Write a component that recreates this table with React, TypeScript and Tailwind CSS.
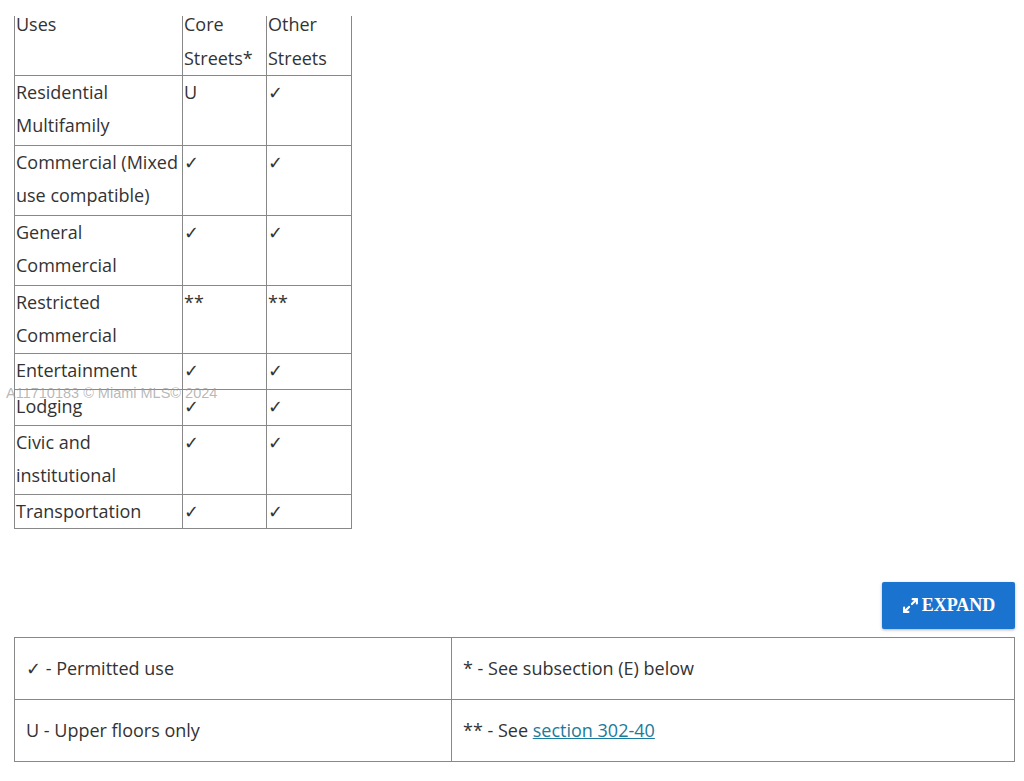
import { Maximize2 } from "lucide-react";

const rows: { use: string[]; core: string; other: string; h: string }[] = [
  { use: ["Residential", "Multifamily"], core: "U", other: "✓", h: "h-[70px]" },
  { use: ["Commercial (Mixed", "use compatible)"], core: "✓", other: "✓", h: "h-[70px]" },
  { use: ["General", "Commercial"], core: "✓", other: "✓", h: "h-[70px]" },
  { use: ["Restricted", "Commercial"], core: "**", other: "**", h: "h-[68px]" },
  { use: ["Entertainment"], core: "✓", other: "✓", h: "h-[36px]" },
  { use: ["Lodging"], core: "✓", other: "✓", h: "h-[36px]" },
  { use: ["Civic and", "institutional"], core: "✓", other: "✓", h: "h-[69px]" },
  { use: ["Transportation"], core: "✓", other: "✓", h: "h-[34px]" },
];

export default function App() {
  return (
    <div
      className="relative min-h-screen w-[1024px] bg-white text-[#333]"
      style={{ fontFamily: '"Open Sans", "Liberation Sans", sans-serif' }}
    >
      <div className="pl-[14px] pt-[16px]">
        <table className="border-collapse text-[18px] leading-[33px]">
          <thead>
            <tr className="h-[59px] align-top">
              <th className="w-[168px] border-x border-b border-[#888] px-[1px] text-left font-normal leading-[34px]">
                <div className="-mt-[9px]">Uses</div>
              </th>
              <th className="w-[84px] border-x border-b border-[#888] px-[1px] text-left font-normal leading-[34px]">
                <div className="-mt-[9px]">
                  Core
                  <br />
                  Streets*
                </div>
              </th>
              <th className="w-[85px] border-x border-b border-[#888] px-[1px] text-left font-normal leading-[34px]">
                <div className="-mt-[9px]">
                  Other
                  <br />
                  Streets
                </div>
              </th>
            </tr>
          </thead>
          <tbody>
            {rows.map((r) => (
              <tr key={r.use[0]} className={`align-top ${r.h}`}>
                <td className="whitespace-nowrap border border-[#888] px-[1px]">
                  {r.use.map((l) => (
                    <div key={l}>{l}</div>
                  ))}
                </td>
                <td className="border border-[#888] px-[1px]">{r.core}</td>
                <td className="border border-[#888] px-[1px]">{r.other}</td>
              </tr>
            ))}
          </tbody>
        </table>
      </div>

      <div
        className="pointer-events-none absolute left-[6px] top-[383px] text-[14.5px] text-[#999]/70"
        style={{ fontFamily: '"Liberation Sans", Arial, sans-serif' }}
      >
        A11710183 © Miami MLS© 2024
      </div>

      <div className="flex justify-end pr-[9px] pt-[53px]">
        <button
          className="flex h-[47px] w-[133px] items-center justify-center gap-[3px] rounded-[2px] bg-[#1a74cf] text-[18px] font-semibold text-white shadow-[0_1px_3px_rgba(0,0,0,0.3)]"
          style={{ fontFamily: '"Liberation Serif", "Times New Roman", serif' }}
        >
          <Maximize2 size={17} strokeWidth={3} />
          EXPAND
        </button>
      </div>

      <div className="pl-[14px] pt-[8px]">
        <table className="w-[1001px] border-collapse text-[18px]">
          <tbody>
            <tr className="h-[62px]">
              <td className="w-[437px] border border-[#888] px-[11px]">✓ - Permitted use</td>
              <td className="border border-[#888] px-[11px]">* - See subsection (E) below</td>
            </tr>
            <tr className="h-[62px]">
              <td className="border border-[#888] px-[11px]">U - Upper floors only</td>
              <td className="border border-[#888] px-[11px]">
                ** - See{" "}
                <a href="#" className="text-[#1c7a9c] underline">
                  section 302-40
                </a>
              </td>
            </tr>
          </tbody>
        </table>
      </div>
    </div>
  );
}
